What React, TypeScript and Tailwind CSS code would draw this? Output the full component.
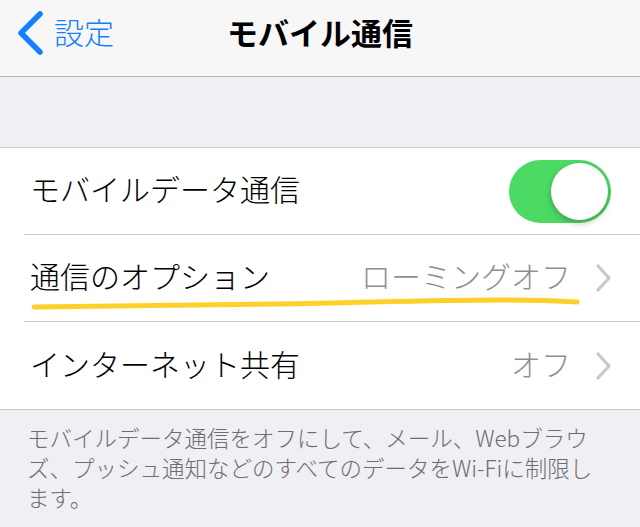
import type { ReactNode } from "react";

const FONT = "font-['Noto_Sans_CJK_JP','Noto_Sans',sans-serif]";

function Chevron() {
  return (
    <svg width="18" height="28" viewBox="0 0 18 28" className="shrink-0">
      <polyline points="3,2 14,14 3,26" fill="none" stroke="#c7c7cc" strokeWidth="3.2" strokeLinecap="round" strokeLinejoin="round" />
    </svg>
  );
}

function Row({ label, children, last }: { label: string; children?: ReactNode; last?: boolean }) {
  return (
    <div className="pl-6 bg-white">
      <div className={`flex items-center h-[87px] pl-[6px] pr-[30px] ${last ? "" : "border-b border-[#c8c7cc]"}`}>
        <span className="text-[30px] font-light text-black leading-none pb-[6px]">{label}</span>
        <div className="flex-1" />
        {children}
      </div>
    </div>
  );
}

export default function App() {
  return (
    <div className={`w-[640px] h-[527px] overflow-hidden bg-[#efeff4] ${FONT} relative`}>
      <header className="h-[77px] bg-[#f7f7f7] border-b border-[#b2b2b2] flex items-start">
        <div className="relative w-full h-[66px] flex items-center">
          <div className="flex items-center pl-[16px] gap-[10px] text-[#147efb]">
            <svg width="28" height="44" viewBox="0 0 28 44">
              <polyline points="24,3 5,22 24,41" fill="none" stroke="#147efb" strokeWidth="5.5" strokeLinecap="round" strokeLinejoin="round" />
            </svg>
            <span className="text-[30px] font-light leading-none pb-[4px]">設定</span>
          </div>
          <h1 className="absolute inset-x-0 text-center text-[31px] font-bold leading-none text-black pointer-events-none pb-[4px]">
            モバイル通信
          </h1>
        </div>
      </header>

      <div className="h-[70px]" />

      <section className="bg-white border-t border-b border-[#c8c7cc]">
        <Row label="モバイルデータ通信">
          <div className="w-[102px] h-[63px] rounded-full bg-[#4cd964] relative mr-[-1px]">
            <div className="absolute right-[3px] top-[3px] w-[57px] h-[57px] rounded-full bg-white shadow-[0_3px_6px_rgba(0,0,0,0.25)]" />
          </div>
        </Row>
        <Row label="通信のオプション">
          <div className="flex items-center gap-[24px] mr-[-3px]">
            <span className="text-[30px] font-light text-[#8e8e93] leading-none pb-[6px]">ローミングオフ</span>
            <Chevron />
          </div>
        </Row>
        <Row label="インターネット共有" last>
          <div className="flex items-center gap-[24px] mr-[-3px]">
            <span className="text-[30px] font-light text-[#8e8e93] leading-none pb-[6px]">オフ</span>
            <Chevron />
          </div>
        </Row>
      </section>

      <p className="px-[27px] pt-[12px] text-[22.5px] font-light leading-[30px] text-[#6d6d72]">
        モバイルデータ通信をオフにして、メール、Webブラウ
        <br />
        ズ、プッシュ通知などのすべてのデータをWi-Fiに制限し
        <br />
        ます。
      </p>

      <svg className="absolute left-0 top-0 pointer-events-none" width="640" height="527" viewBox="0 0 640 527">
        <path
          d="M34 307 C 120 306, 200 305, 280 304 C 360 303, 420 300, 500 300 C 540 300, 560 301, 577 302"
          fill="none"
          stroke="#fdd02c"
          strokeWidth="5"
          strokeLinecap="round"
        />
      </svg>
    </div>
  );
}
